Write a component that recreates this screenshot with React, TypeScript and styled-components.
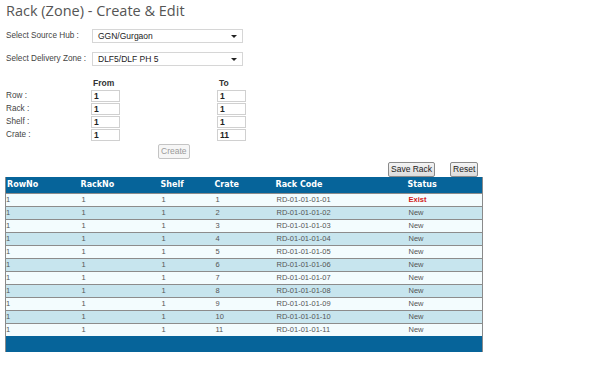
import React from 'react';
import styled, { createGlobalStyle } from 'styled-components';

const GlobalStyle = createGlobalStyle`
  body {
    margin: 0;
    background: #ffffff;
    font-family: 'Liberation Sans', Arial, sans-serif;
    color: #444;
  }
`;

const Page = styled.div`
  width: 595px;
  height: 371px;
  padding: 0 0 0 5px;
  box-sizing: border-box;
  overflow: hidden;
`;

const Title = styled.h1`
  margin: 0;
  padding: 1px 0 0 1px;
  font-family: 'Open Sans', sans-serif;
  font-weight: 400;
  font-size: 14.5px;
  line-height: 20px;
  color: #555;
`;

const SelectRow = styled.div<{ $top: number }>`
  display: flex;
  align-items: center;
  height: 15px;
  margin-top: ${({ $top }) => $top}px;
`;

const Label = styled.span`
  width: 86px;
  padding-left: 1px;
  font-size: 8.2px;
  color: #444;
  white-space: nowrap;
  flex-shrink: 0;
`;

const FakeSelect = styled.div`
  width: 151px;
  height: 14px;
  box-sizing: border-box;
  border: 1px solid #d6d6d6;
  background: #fff;
  display: flex;
  align-items: center;
  justify-content: space-between;
  padding: 0 5px 0 5px;
  font-size: 8.5px;
  color: #222;
`;

const Arrow = styled.span`
  width: 0;
  height: 0;
  border-left: 3px solid transparent;
  border-right: 3px solid transparent;
  border-top: 3px solid #222;
  margin-top: 1px;
`;

const RangeGrid = styled.div`
  display: grid;
  grid-template-columns: 86px 126px 40px;
  grid-auto-rows: 13px;
  margin-top: 10px;
  align-items: center;
`;

const ColHead = styled.span`
  font-size: 8.5px;
  font-weight: bold;
  color: #333;
  padding-left: 2px;
`;

const SmallInput = styled.div`
  width: 29px;
  height: 12px;
  box-sizing: border-box;
  border: 1px solid #d0d0d0;
  background: #fff;
  font-size: 8.5px;
  font-weight: bold;
  color: #222;
  line-height: 10px;
  padding-left: 2px;
`;

const CreateWrap = styled.div`
  display: flex;
  padding-left: 153px;
  margin-top: 3px;
`;

const Btn = styled.button<{ $disabled?: boolean }>`
  height: 15px;
  padding: 0 2px;
  font-family: 'Liberation Sans', Arial, sans-serif;
  font-size: 8.5px;
  line-height: 13px;
  color: ${({ $disabled }) => ($disabled ? '#9a9a9a' : '#222')};
  background: ${({ $disabled }) =>
    $disabled ? '#f6f6f6' : 'linear-gradient(#f4f4f4, #dcdcdc)'};
  border: 1px solid ${({ $disabled }) => ($disabled ? '#c4c4c4' : '#8a8a8a')};
  border-radius: 2px;
  cursor: pointer;
`;

const ActionBar = styled.div`
  display: flex;
  gap: 15px;
  padding-left: 383px;
  margin-top: 3px;
`;

const Table = styled.table`
  width: 477px;
  border-collapse: collapse;
  table-layout: fixed;
  font-size: 7.5px;
  border-left: 1px solid #8a8a8a;
  border-right: 1px solid #8a8a8a;
`;

const Th = styled.th<{ $w: number }>`
  box-sizing: border-box;
  width: ${({ $w }) => $w}px;
  height: 16px;
  padding: 0 0 0 1px;
  background: #06649a;
  color: #fff;
  text-align: left;
  font-family: 'DejaVu Sans', Verdana, sans-serif;
  font-size: 8px;
  font-weight: bold;
`;

const Tr = styled.tr<{ $alt: boolean }>`
  background: ${({ $alt }) => ($alt ? '#c7e5ee' : '#f3fcfe')};
  border-top: 1px solid #8c8c8c;
`;

const Td = styled.td<{ $first?: boolean }>`
  height: 12px;
  padding: 0 0 0 ${({ $first }) => ($first ? 0 : 2)}px;
  color: #555;
  line-height: 12px;
`;

const Status = styled.span<{ $exist: boolean }>`
  color: ${({ $exist }) => ($exist ? '#d21a1a' : '#555')};
  font-weight: ${({ $exist }) => ($exist ? 'bold' : 'normal')};
`;

const Footer = styled.td`
  height: 16px;
  padding: 0;
  background: #06649a;
`;

const ranges = [
  { label: 'Row :', from: '1', to: '1' },
  { label: 'Rack :', from: '1', to: '1' },
  { label: 'Shelf :', from: '1', to: '1' },
  { label: 'Crate :', from: '1', to: '11' },
];

const cols = [
  { name: 'RowNo', w: 74 },
  { name: 'RackNo', w: 80 },
  { name: 'Shelf', w: 54 },
  { name: 'Crate', w: 61 },
  { name: 'Rack Code', w: 132 },
  { name: 'Status', w: 76 },
];

const rows = Array.from({ length: 11 }, (_, i) => {
  const n = String(i + 1).padStart(2, '0');
  return {
    crate: i + 1,
    code: `RD-01-01-01-${n}`,
    status: i === 0 ? 'Exist' : 'New',
  };
});

export default function App() {
  return (
    <Page>
      <GlobalStyle />
      <Title>Rack (Zone) - Create &amp; Edit</Title>
      <SelectRow $top={7}>
        <Label>Select Source Hub :</Label>
        <FakeSelect>
          GGN/Gurgaon
          <Arrow />
        </FakeSelect>
      </SelectRow>
      <SelectRow $top={8}>
        <Label>Select Delivery Zone :</Label>
        <FakeSelect>
          DLF5/DLF PH 5
          <Arrow />
        </FakeSelect>
      </SelectRow>
      <RangeGrid>
        <span />
        <ColHead>From</ColHead>
        <ColHead>To</ColHead>
        {ranges.map((r) => (
          <React.Fragment key={r.label}>
            <Label>{r.label}</Label>
            <SmallInput>{r.from}</SmallInput>
            <SmallInput>{r.to}</SmallInput>
          </React.Fragment>
        ))}
      </RangeGrid>
      <CreateWrap>
        <Btn $disabled>Create</Btn>
      </CreateWrap>
      <ActionBar>
        <Btn>Save Rack</Btn>
        <Btn>Reset</Btn>
      </ActionBar>
      <Table>
        <thead>
          <tr>
            {cols.map((c) => (
              <Th key={c.name} $w={c.w}>
                {c.name}
              </Th>
            ))}
          </tr>
        </thead>
        <tbody>
          {rows.map((r, i) => (
            <Tr key={r.code} $alt={i % 2 === 1}>
              <Td $first>1</Td>
              <Td>1</Td>
              <Td>1</Td>
              <Td>{r.crate}</Td>
              <Td>{r.code}</Td>
              <Td>
                <Status $exist={r.status === 'Exist'}>{r.status}</Status>
              </Td>
            </Tr>
          ))}
          <tr>
            <Footer colSpan={6} />
          </tr>
        </tbody>
      </Table>
    </Page>
  );
}
